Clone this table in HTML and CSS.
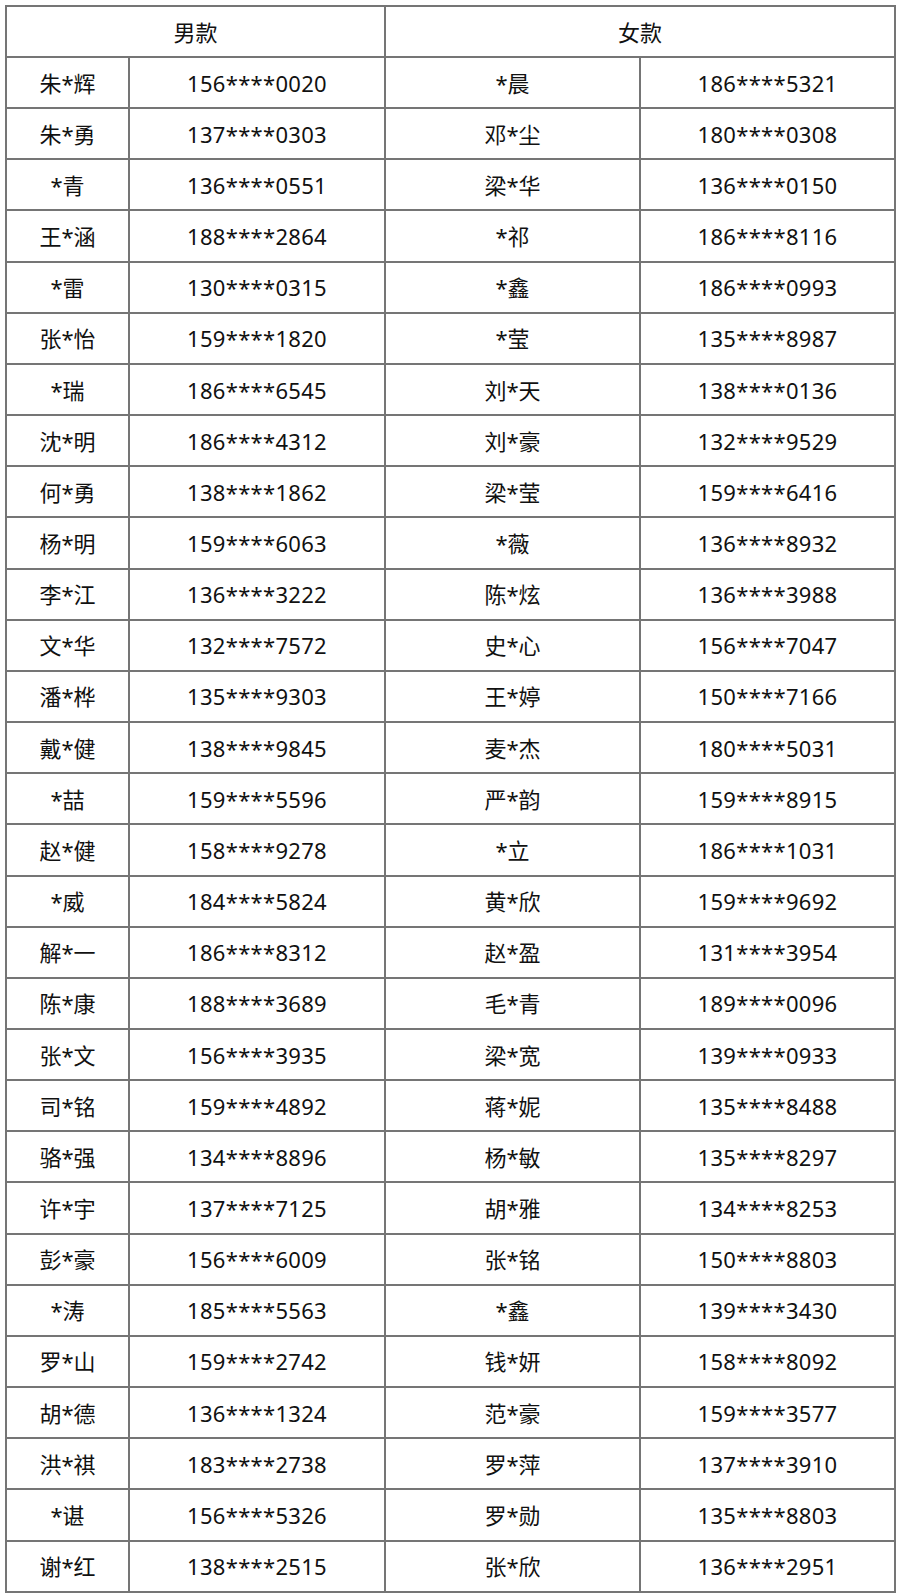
FILE: index.html
```html
<!DOCTYPE html>
<html lang="zh">
<head>
<meta charset="utf-8">
<link rel="stylesheet" href="styles.css">
</head>
<body>
<table class="list">
<colgroup><col class="c1"><col class="c2"><col class="c3"><col class="c4"></colgroup>
<thead>
<tr class="head"><th colspan="2">男款</th><th colspan="2">女款</th></tr>
</thead>
<tbody>
<tr><td>朱*辉</td><td>156****0020</td><td>*晨</td><td>186****5321</td></tr>
<tr><td>朱*勇</td><td>137****0303</td><td>邓*尘</td><td>180****0308</td></tr>
<tr><td>*青</td><td>136****0551</td><td>梁*华</td><td>136****0150</td></tr>
<tr><td>王*涵</td><td>188****2864</td><td>*祁</td><td>186****8116</td></tr>
<tr><td>*雷</td><td>130****0315</td><td>*鑫</td><td>186****0993</td></tr>
<tr><td>张*怡</td><td>159****1820</td><td>*莹</td><td>135****8987</td></tr>
<tr><td>*瑞</td><td>186****6545</td><td>刘*天</td><td>138****0136</td></tr>
<tr><td>沈*明</td><td>186****4312</td><td>刘*豪</td><td>132****9529</td></tr>
<tr><td>何*勇</td><td>138****1862</td><td>梁*莹</td><td>159****6416</td></tr>
<tr><td>杨*明</td><td>159****6063</td><td>*薇</td><td>136****8932</td></tr>
<tr><td>李*江</td><td>136****3222</td><td>陈*炫</td><td>136****3988</td></tr>
<tr><td>文*华</td><td>132****7572</td><td>史*心</td><td>156****7047</td></tr>
<tr><td>潘*桦</td><td>135****9303</td><td>王*婷</td><td>150****7166</td></tr>
<tr><td>戴*健</td><td>138****9845</td><td>麦*杰</td><td>180****5031</td></tr>
<tr><td>*喆</td><td>159****5596</td><td>严*韵</td><td>159****8915</td></tr>
<tr><td>赵*健</td><td>158****9278</td><td>*立</td><td>186****1031</td></tr>
<tr><td>*威</td><td>184****5824</td><td>黄*欣</td><td>159****9692</td></tr>
<tr><td>解*一</td><td>186****8312</td><td>赵*盈</td><td>131****3954</td></tr>
<tr><td>陈*康</td><td>188****3689</td><td>毛*青</td><td>189****0096</td></tr>
<tr><td>张*文</td><td>156****3935</td><td>梁*宽</td><td>139****0933</td></tr>
<tr><td>司*铭</td><td>159****4892</td><td>蒋*妮</td><td>135****8488</td></tr>
<tr><td>骆*强</td><td>134****8896</td><td>杨*敏</td><td>135****8297</td></tr>
<tr><td>许*宇</td><td>137****7125</td><td>胡*雅</td><td>134****8253</td></tr>
<tr><td>彭*豪</td><td>156****6009</td><td>张*铭</td><td>150****8803</td></tr>
<tr><td>*涛</td><td>185****5563</td><td>*鑫</td><td>139****3430</td></tr>
<tr><td>罗*山</td><td>159****2742</td><td>钱*妍</td><td>158****8092</td></tr>
<tr><td>胡*德</td><td>136****1324</td><td>范*豪</td><td>159****3577</td></tr>
<tr><td>洪*祺</td><td>183****2738</td><td>罗*萍</td><td>137****3910</td></tr>
<tr><td>*谌</td><td>156****5326</td><td>罗*勋</td><td>135****8803</td></tr>
<tr><td>谢*红</td><td>138****2515</td><td>张*欣</td><td>136****2951</td></tr>
</tbody>
</table>
</body>
</html>
```
FILE: styles.css
```css
html, body {
  margin: 0;
  padding: 0;
  background: #ffffff;
}
body {
  padding: 5px 0 0 5px;
  font-family: "Noto Sans", "Noto Sans CJK SC", sans-serif;
  color: #111111;
}
.list {
  border-collapse: collapse;
  table-layout: fixed;
  width: 891px;
}
.c1 { width: 123px; }
.c2 { width: 256px; }
.c3 { width: 255px; }
.c4 { width: 255px; }
.list th,
.list td {
  border: 2px solid #757575;
  padding: 0;
  text-align: center;
  vertical-align: middle;
  font-size: 22px;
  font-weight: 400;
  line-height: 1;
  height: 51.17px;
  box-sizing: border-box;
}
.list td:nth-child(even) {
  letter-spacing: 0.3px;
}
.head th {
  height: 51px;
}
```
